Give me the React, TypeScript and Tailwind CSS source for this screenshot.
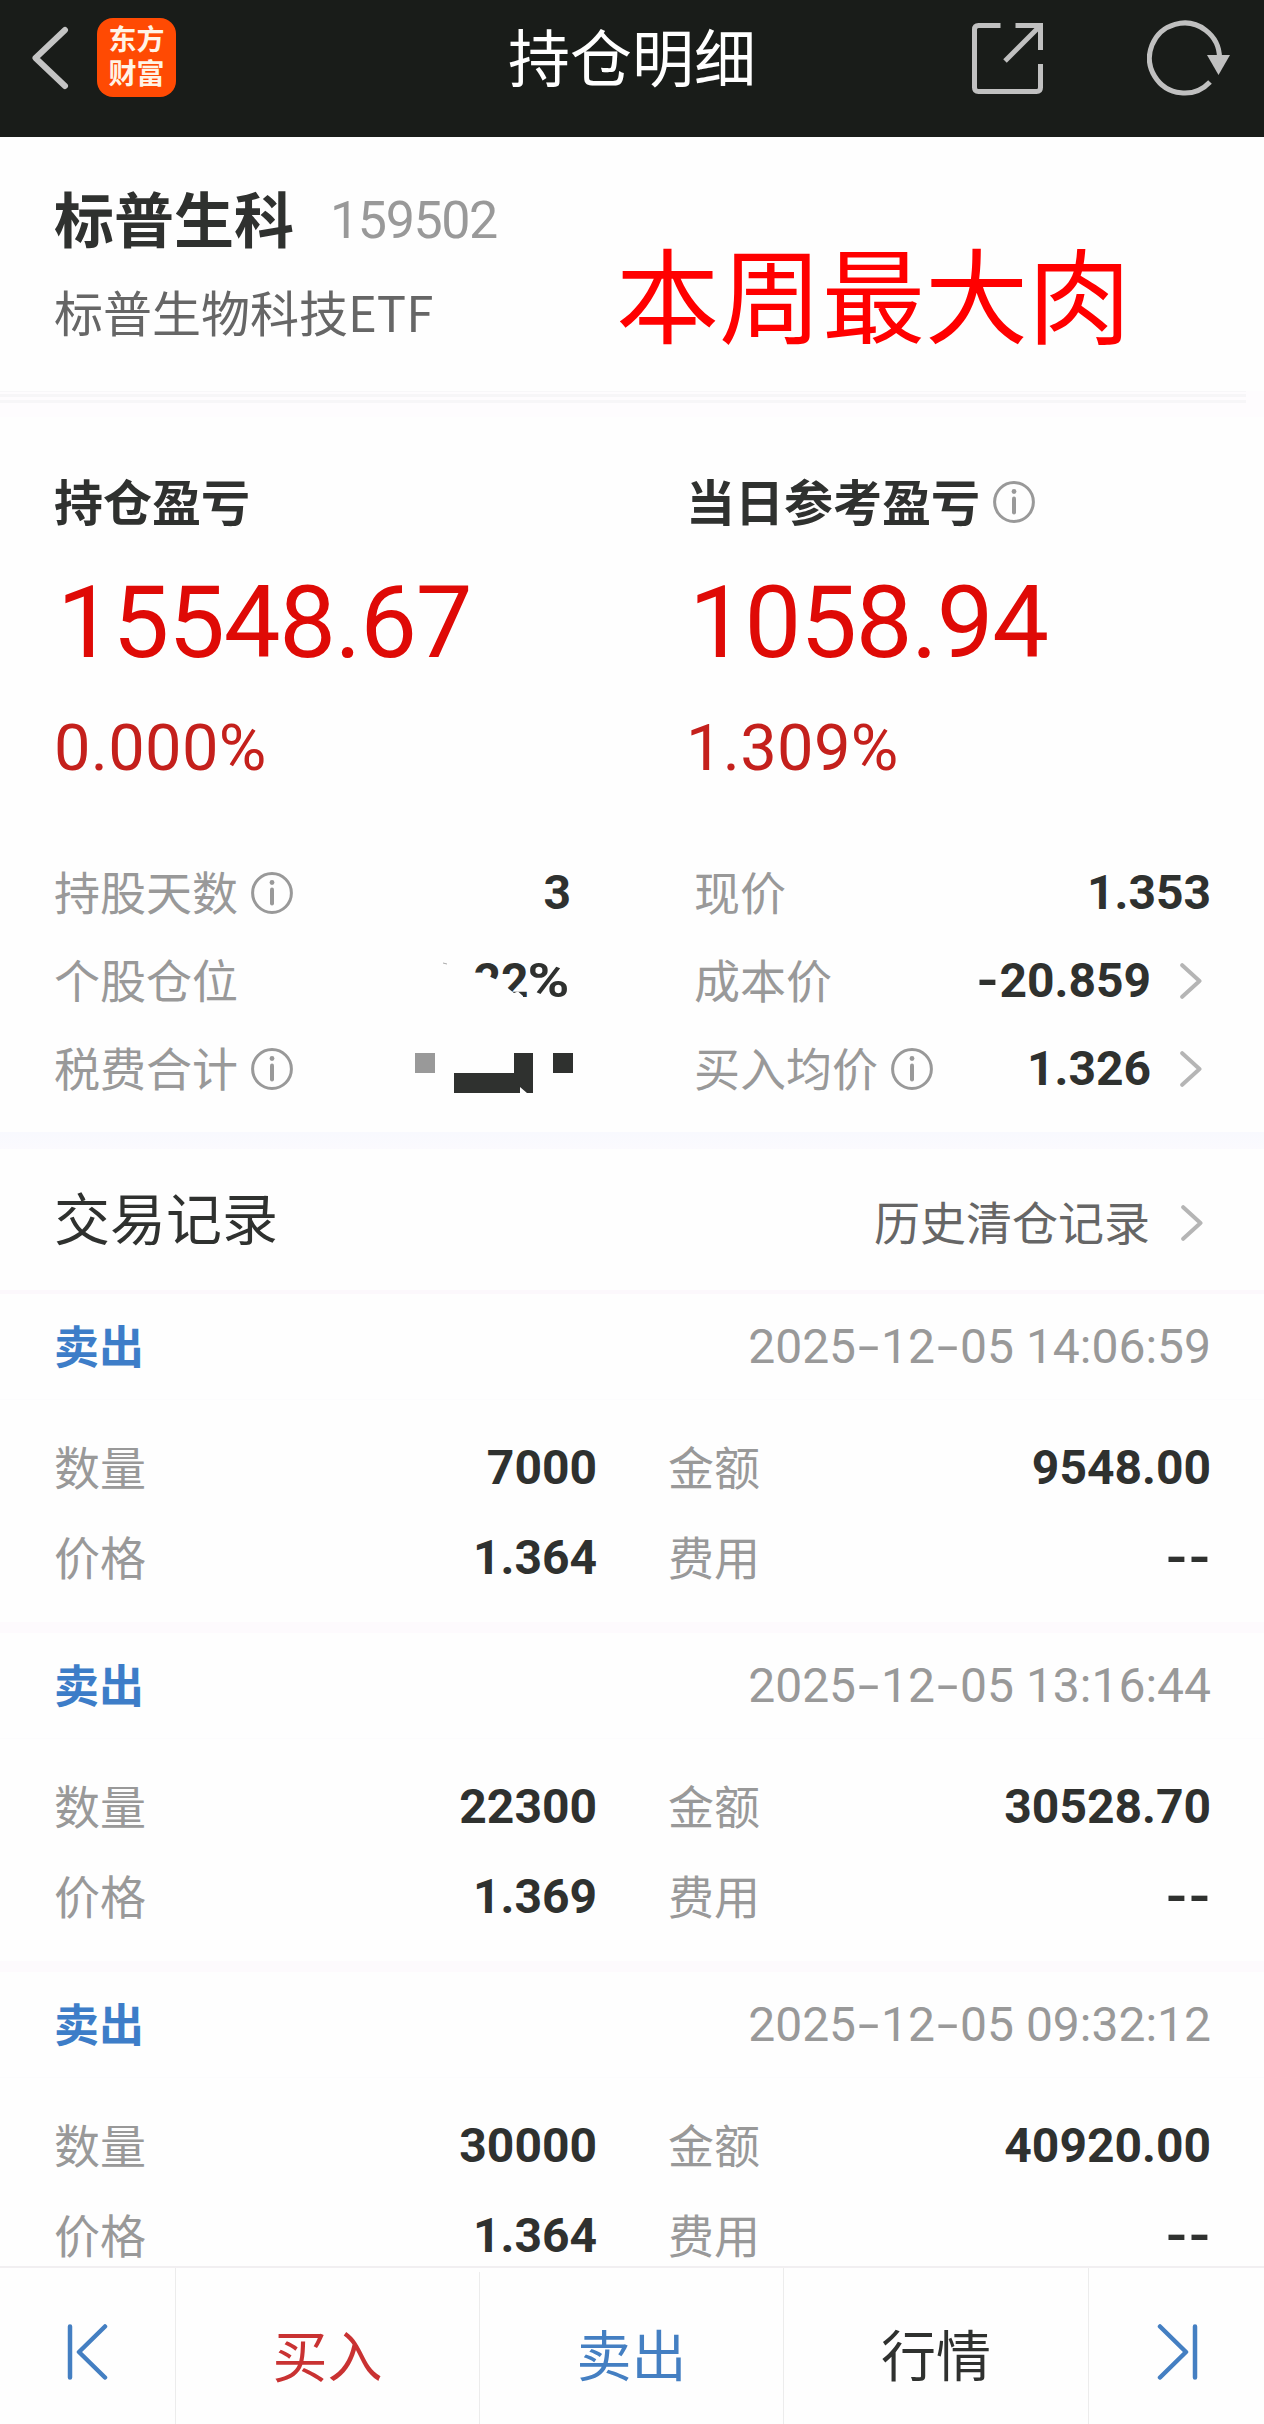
import type { ReactNode } from "react";

interface TradeRecord {
  time: string;
  quantity: string;
  amount: string;
  price: string;
  fee: string;
}

const records: TradeRecord[] = [
  {
    time: "2025-12-05 14:06:59",
    quantity: "7000",
    amount: "9548.00",
    price: "1.364",
    fee: "--",
  },
  {
    time: "2025-12-05 13:16:44",
    quantity: "22300",
    amount: "30528.70",
    price: "1.369",
    fee: "--",
  },
  {
    time: "2025-12-05 09:32:12",
    quantity: "30000",
    amount: "40920.00",
    price: "1.364",
    fee: "--",
  },
];

function InfoIcon() {
  return (
    <svg className="w-[42px] h-[42px] shrink-0 text-[#999]" viewBox="0 0 42 42" fill="none">
      <circle cx="21" cy="21" r="19.4" stroke="currentColor" strokeWidth="3" />
      <circle cx="21" cy="10.5" r="2.4" fill="currentColor" />
      <path d="M21 17.5v14" stroke="currentColor" strokeWidth="4" strokeLinecap="round" />
    </svg>
  );
}

function ChevronIcon() {
  return (
    <svg
      className="w-[22px] h-[36px] shrink-0 ml-[31px] mr-[7px] text-[#b5b5b5]"
      viewBox="0 0 22 36"
      fill="none"
    >
      <path
        d="M2.2 2.2L19.5 18L2.2 33.8"
        stroke="currentColor"
        strokeWidth="4"
        strokeLinecap="round"
        strokeLinejoin="round"
      />
    </svg>
  );
}

// Roboto's hyphen is narrow, so give every "-" a digit-like cell
function WideHyphens({ text, className }: { text: string; className: string }) {
  return (
    <>
      {text.split(/(-)/).map((part, i) =>
        part === "-" ? (
          <span key={i} className={className}>
            -
          </span>
        ) : (
          part
        )
      )}
    </>
  );
}

function Num({ value }: { value: string }) {
  return (
    <span className="-mr-[2px] whitespace-nowrap font-[Roboto,sans-serif] font-bold text-[48px] leading-none text-[#2f312f]">
      <WideHyphens
        text={value}
        className="inline-block w-[23px] text-center scale-x-[1.2]"
      />
    </span>
  );
}

function Label({ children }: { children: ReactNode }) {
  return <span className="pb-[7px] text-[46px] leading-none text-[#999]">{children}</span>;
}

interface StatRowProps {
  label: string;
  info?: boolean;
  chevron?: boolean;
  children: ReactNode;
}

function StatRow({ label, info, chevron, children }: StatRowProps) {
  return (
    <div className="flex items-center h-[88px]">
      <Label>{label}</Label>
      {info && (
        <span className="ml-[13px]">
          <InfoIcon />
        </span>
      )}
      <div className="ml-auto flex items-center">
        {children}
        {chevron && <ChevronIcon />}
      </div>
    </div>
  );
}

interface ProfitProps {
  title: string;
  value: string;
  percent: string;
  info?: boolean;
}

function Profit({ title, value, percent, info }: ProfitProps) {
  return (
    <div className="flex flex-col">
      <div className="flex items-center h-[50px] text-[49px] leading-none font-bold text-[#2f312f]">
        <span className="pb-[5px]">{title}</span>
        {info && (
          <span className="ml-[13px]">
            <InfoIcon />
          </span>
        )}
      </div>
      <div className="mt-[45px] pl-[3px] font-[Roboto,sans-serif] text-[101px] leading-[102px] tracking-[-1.2px] text-[#df0a06]">
        {value}
      </div>
      <div className="mt-[41px] font-[Roboto,sans-serif] text-[65px] leading-[66px] tracking-[0.3px] text-[#c4201c]">
        {percent}
      </div>
    </div>
  );
}

function Field({ label, value }: { label: string; value: string }) {
  return (
    <div className="flex items-center justify-between h-[90px]">
      <Label>{label}</Label>
      <Num value={value} />
    </div>
  );
}

function RecordItem({ record }: { record: TradeRecord }) {
  return (
    <div className="h-[339px]">
      <div className="flex items-center justify-between h-[105px] pl-[54px] pr-[53px]">
        <span className="pb-[4px] text-[45px] leading-none font-bold text-[#3d7dc8]">卖出</span>
        <span className="font-[Roboto,sans-serif] text-[48px] leading-none text-[#999]">
          <WideHyphens
            text={record.time}
            className="inline-block w-[25px] text-center scale-x-[1.6]"
          />
        </span>
      </div>
      <div className="grid grid-cols-[541px_541px] gap-x-[73px] pt-[23px] pl-[54px] border-t border-[#fcfcfd]">
        <Field label="数量" value={record.quantity} />
        <Field label="金额" value={record.amount} />
        <Field label="价格" value={record.price} />
        <Field label="费用" value={record.fee} />
      </div>
    </div>
  );
}

export default function App() {
  return (
    <div className="w-[1264px] h-[2424px] flex flex-col overflow-hidden bg-[#fefefe] font-['Noto_Sans_CJK_SC',sans-serif]">
      <header className="flex items-center h-[137px] shrink-0 pb-[21px] bg-[#191c19]">
        <div className="flex items-center w-[400px] pl-[31px]">
          <svg className="w-[38px] h-[64px]" viewBox="0 0 38 64" fill="none">
            <path
              d="M34 4L4.5 32L34 60"
              stroke="#c4c4c4"
              strokeWidth="6"
              strokeLinecap="round"
              strokeLinejoin="round"
            />
          </svg>
          <div className="flex flex-col items-center justify-center gap-[6px] w-[79px] h-[79px] ml-[28px] mb-px pb-[5px] rounded-[16px] bg-[#ff4a03] text-[28px] leading-none font-bold text-[#fff3e6]">
            <span>东方</span>
            <span>财富</span>
          </div>
        </div>
        <h1 className="w-[464px] pb-[6px] text-center text-[62px] leading-none text-white">
          持仓明细
        </h1>
        <div className="flex items-center w-[400px] pl-[108px]">
          <svg className="w-[71px] h-[71px]" viewBox="0 0 71 71" fill="none" stroke="#c0c0c0" strokeWidth="5">
            <path d="M28.5 2.5H6.5Q2.5 2.5 2.5 6.5V64.5Q2.5 68.5 6.5 68.5H64.5Q68.5 68.5 68.5 64.5V41" />
            <path d="M43.5 2.5H68.5V27" />
            <path d="M33 38L67 4" />
          </svg>
          <svg className="w-[84px] h-[76px] ml-[104px]" viewBox="0 0 84 76" fill="none">
            <path d="M72.5 38A35 35 0 1 0 63 62" stroke="#c0c0c0" strokeWidth="5" />
            <path d="M60 35H83L71.5 55Z" fill="#c0c0c0" />
          </svg>
        </div>
      </header>

      <section className="relative h-[254px] shrink-0 pl-[54px] pt-[48px]">
        <div className="flex items-center h-[64px]">
          <h2 className="text-[60px] leading-none font-bold text-[#2f312f]">标普生科</h2>
          <span className="ml-[36px] pt-[7px] font-[Roboto,sans-serif] text-[52px] leading-none tracking-[-1.4px] text-[#999]">
            159502
          </span>
        </div>
        <div className="mt-[36px] text-[49px] leading-[52px] text-[#666]">标普生物科技ETF</div>
        {/* note written over the card */}
        <div className="absolute left-[616px] top-[103px] text-[103px] leading-none text-[#f00]">
          本周最大肉
        </div>
      </section>

      <div className="h-[26px] shrink-0 bg-[#fefcfe]">
        <div className="flex flex-col mr-[18px]">
          <div className="h-px bg-[#f8f7f9]" />
          <div className="h-[3px] mt-[2px] bg-[#f7f6f8]" />
          <div className="h-[3px] mt-[3px] bg-[#f7f6f8]" />
        </div>
      </div>

      <section className="grid grid-cols-[632px_1fr] h-[361px] shrink-0 pl-[54px] pt-[60px]">
        <Profit title="持仓盈亏" value="15548.67" percent="0.000%" />
        <Profit title="当日参考盈亏" value="1058.94" percent="1.309%" info />
      </section>

      <section className="grid grid-cols-[515px_515px] gap-x-[125px] h-[354px] shrink-0 pl-[54px] pt-[71px]">
        <div>
          <StatRow label="持股天数" info>
            <Num value="3" />
          </StatRow>
          <StatRow label="个股仓位">
            <div className="relative flex items-center">
              <Num value="22" />
              <span className="ml-[7px] inline-block origin-right scale-x-[1.18] font-[Roboto,sans-serif] font-bold text-[48px] leading-none text-[#2f312f]">
                %
              </span>
              <svg
                className="absolute right-0 -top-[2px] w-[130px] h-[52px]"
                viewBox="0 0 130 52"
                fill="none"
              >
                <path
                  d="M26 18L42 17.500L56 24L62 26L67.500 32L75 38L79 36.500L84 41V50H26Z"
                  fill="#fefefe"
                />
                <path d="M4 8L8 9" stroke="#aaa" strokeWidth="1" />
              </svg>
            </div>
          </StatRow>
          <StatRow label="税费合计" info>
            {/* mosaic over the hidden amount */}
            <svg className="w-[158px] h-[40px] -mr-[4px] mt-[7px]" viewBox="0 0 158 40">
              <path d="M0 0H20V20H0Z" fill="#999" />
              <path d="M39 20H99V0H118V40H112L105 34V40H39Z" fill="#2f312f" />
              <path d="M138 0H158V20H138Z" fill="#2f312f" />
            </svg>
          </StatRow>
        </div>
        <div>
          <StatRow label="现价">
            <Num value="1.353" />
          </StatRow>
          <StatRow label="成本价" chevron>
            <Num value="-20.859" />
          </StatRow>
          <StatRow label="买入均价" info chevron>
            <Num value="1.326" />
          </StatRow>
        </div>
      </section>

      <div className="h-[17px] shrink-0 bg-gradient-to-b from-[#f8f9fe] to-[#fbfafe]" />

      <section className="flex items-center h-[141px] shrink-0 pl-[54px] pr-[54px]">
        <h3 className="pb-[7px] text-[56px] leading-none text-[#2f312f]">交易记录</h3>
        <div className="ml-auto flex items-center pt-[6px]">
          <span className="pb-[6px] text-[46px] leading-none text-[#666]">历史清仓记录</span>
          <ChevronIcon />
        </div>
      </section>

      <div className="h-[4px] shrink-0 bg-[#fcf8fc]" />

      <div className="h-[972px] shrink-0 overflow-hidden">
        {records.map((record, index) => (
          <div key={index} className="relative">
            <RecordItem record={record} />
            {index < records.length - 1 && (
              <div className="absolute inset-x-0 bottom-0 h-[11px] bg-[#fdfafd]" />
            )}
          </div>
        ))}
      </div>

      <nav className="grid grid-cols-[176px_304px_304px_305px_175px] h-[158px] shrink-0 border-t-2 border-[#f1eff1] text-[55px] leading-none">
        <button className="flex items-center pl-[67px] pt-[11px] border-r border-[#ececec]">
          <svg className="w-[42px] h-[56px]" viewBox="0 0 42 56" fill="none">
            <path
              d="M3 2.5V53.5M38 2.5L12 28L38 53.5"
              stroke="#447fc2"
              strokeWidth="4.5"
              strokeLinecap="round"
              strokeLinejoin="round"
            />
          </svg>
        </button>
        <button className="flex items-center justify-center pt-[10px] border-r border-[#ececec] mt-1 text-[#c93232]">
          买入
        </button>
        <button className="flex items-center justify-center pt-[12px] border-r border-[#ececec] text-[#447fc2]">
          卖出
        </button>
        <button className="flex items-center justify-center pt-[12px] border-r border-[#ececec] text-[#2f312f]">
          行情
        </button>
        <button className="flex items-center pl-[68px] pt-[11px]">
          <svg className="w-[42px] h-[56px]" viewBox="0 0 42 56" fill="none">
            <path
              d="M38 2.5V53.5M3 2.5L29 28L3 53.5"
              stroke="#447fc2"
              strokeWidth="4.5"
              strokeLinecap="round"
              strokeLinejoin="round"
            />
          </svg>
        </button>
      </nav>
    </div>
  );
}
